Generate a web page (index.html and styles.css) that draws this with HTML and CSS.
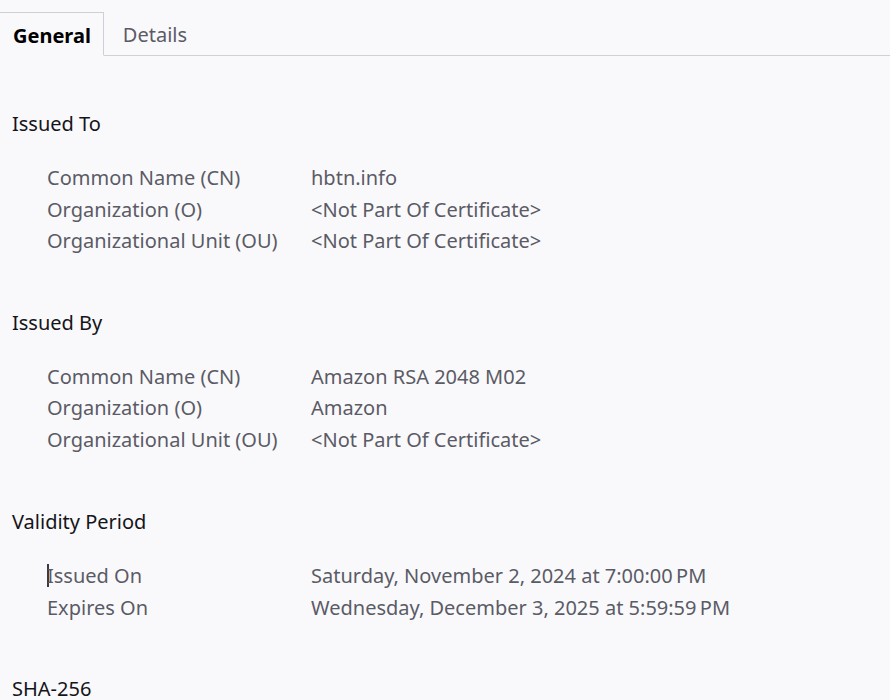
FILE: index.html
```html
<!DOCTYPE html>
<html>
<head>
<meta charset="utf-8">
<link rel="stylesheet" href="styles.css">
</head>
<body>
<div class="tabs">
  <div class="tab active">General</div>
  <div class="tab">Details</div>
  <div class="tab-fill"></div>
</div>
<div class="content">
  <section class="section">
    <h2 class="heading">Issued To</h2>
    <div class="rows">
      <div class="label">Common Name (CN)</div><div class="value">hbtn.info</div>
      <div class="label">Organization (O)</div><div class="value">&lt;Not Part Of Certificate&gt;</div>
      <div class="label">Organizational Unit (OU)</div><div class="value">&lt;Not Part Of Certificate&gt;</div>
    </div>
  </section>
  <section class="section">
    <h2 class="heading">Issued By</h2>
    <div class="rows">
      <div class="label">Common Name (CN)</div><div class="value">Amazon RSA 2048 M02</div>
      <div class="label">Organization (O)</div><div class="value">Amazon</div>
      <div class="label">Organizational Unit (OU)</div><div class="value">&lt;Not Part Of Certificate&gt;</div>
    </div>
  </section>
  <section class="section validity">
    <h2 class="heading">Validity Period</h2>
    <div class="rows">
      <div class="label"><span class="caret"></span>Issued On</div><div class="value">Saturday, November 2, 2024 at 7:00:00&#8239;PM</div>
      <div class="label">Expires On</div><div class="value">Wednesday, December 3, 2025 at 5:59:59&#8239;PM</div>
    </div>
  </section>
  <section class="section">
    <h2 class="heading">SHA-256</h2>
  </section>
</div>
</body>
</html>
```
FILE: styles.css
```css
html, body {
  margin: 0;
  padding: 0;
  background: #f9f9fb;
  overflow: hidden;
}
body {
  font-family: "Noto Sans", "Open Sans", sans-serif;
  font-size: 20px;
  color: #15141a;
  width: 890px;
  height: 700px;
}
.tabs {
  display: flex;
  height: 56px;
  align-items: flex-end;
}
.tab {
  height: 44px;
  box-sizing: border-box;
  padding: 2px 20px 0 19px;
  line-height: 42px;
  color: #5b5b66;
  border-bottom: 1px solid #cfcfd8;
}
.tab.active {
  margin-left: -1px;
  padding: 2px 12px 0 13px;
  font-weight: 700;
  color: #000;
  border: 1px solid #cfcfd8;
  border-bottom: 1px solid transparent;
}
.tab-fill {
  flex: 1;
  height: 44px;
  border-bottom: 1px solid #cfcfd8;
  box-sizing: border-box;
}
.section {
  padding-top: 50px;
}
.section:first-child {
  padding-top: 52px;
}
.section.validity {
  padding-top: 51px;
}
.heading {
  margin: 0;
  padding-left: 12px;
  font-size: 20px;
  font-weight: 400;
  line-height: 32px;
  color: #15141a;
}
.rows {
  margin-top: 22px;
  padding-left: 47px;
  display: grid;
  grid-template-columns: 264px auto;
  line-height: 31.5px;
  color: #5b5b66;
}
.label, .value {
  white-space: nowrap;
}
.caret {
  display: inline-block;
  width: 2px;
  height: 23px;
  background: #3a3a44;
  vertical-align: -4px;
  margin-right: -2px;
}
```
